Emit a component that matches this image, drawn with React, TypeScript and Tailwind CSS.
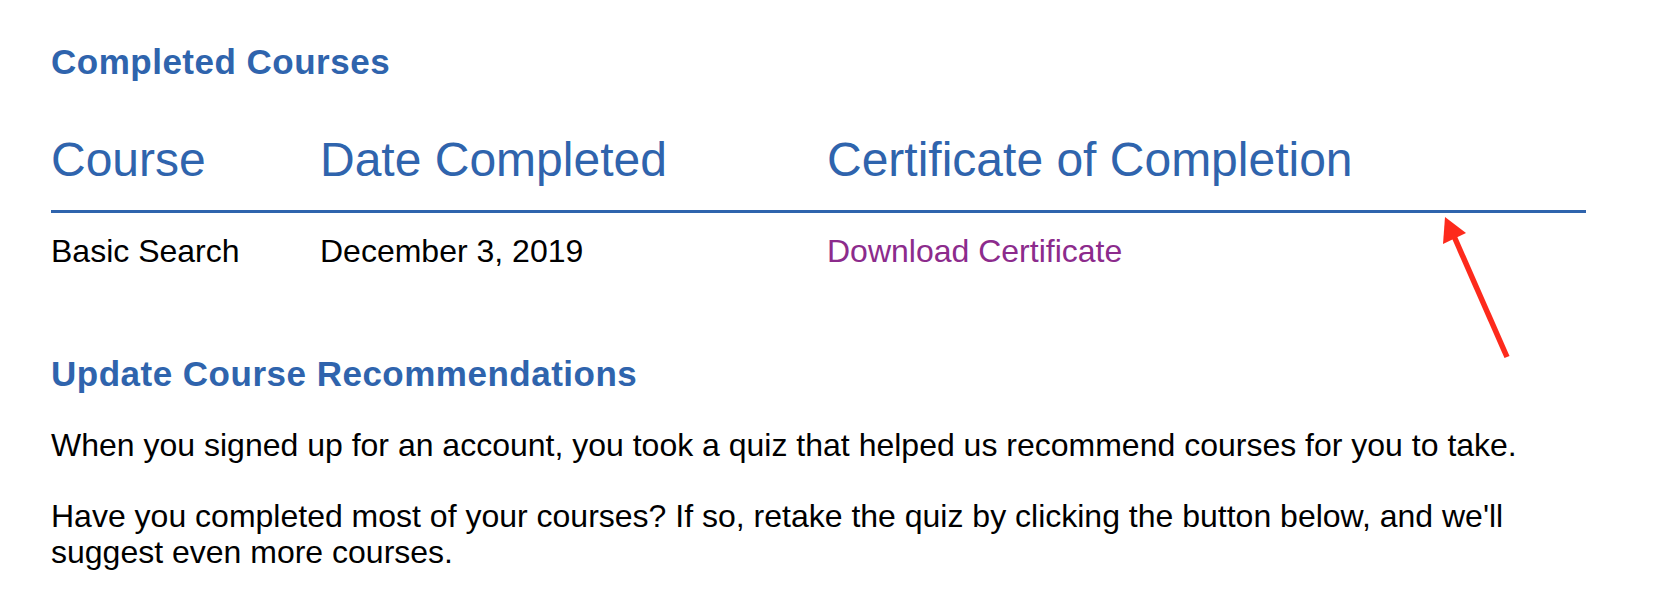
import React from "react";

export default function App() {
  return (
    <div
      className="relative w-[1656px] h-[592px] overflow-hidden bg-white pl-[51px] pt-[42px] text-black"
      style={{ fontFamily: '"Liberation Sans", Arial, Helvetica, sans-serif' }}
    >
      <h2 className="text-[35px] leading-[40px] font-bold tracking-[0.5px] text-[#2f64ad]">
        Completed Courses
      </h2>

      <div className="mt-[50px] w-[1535px]">
        <div className="grid grid-cols-[269px_507px_1fr] border-b-[3px] border-[#2f64ad] pb-[22px] text-[48px] leading-[56px] text-[#2f64ad]">
          <div>Course</div>
          <div>Date Completed</div>
          <div>Certificate of Completion</div>
        </div>
        <div className="grid grid-cols-[269px_507px_1fr] pt-[20px] text-[32px] leading-[36px]">
          <div>Basic Search</div>
          <div>December 3, 2019</div>
          <div>
            <a href="#" className="text-[#8c2b8c]">
              Download Certificate
            </a>
          </div>
        </div>
      </div>

      <h2 className="mt-[85px] text-[35px] leading-[40px] font-bold tracking-[0.5px] text-[#2f64ad]">
        Update Course Recommendations
      </h2>
      <p className="mt-[33px] w-[1535px] text-[32px] leading-[36px]">
        When you signed up for an account, you took a quiz that helped us recommend courses for you to take.
      </p>
      <p className="mt-[35px] w-[1535px] text-[32px] leading-[36px]">
        Have you completed most of your courses? If so, retake the quiz by clicking the button below, and we'll suggest even more courses.
      </p>

      <svg
        className="absolute left-[1420px] top-[200px]"
        width="110"
        height="170"
        viewBox="0 0 110 170"
      >
        <line x1="87" y1="157" x2="33" y2="34" stroke="#fd2a1c" strokeWidth="5.5" strokeLinecap="butt" />
        <polygon points="25,17 23,44 46,33" fill="#fd2a1c" />
      </svg>
    </div>
  );
}
